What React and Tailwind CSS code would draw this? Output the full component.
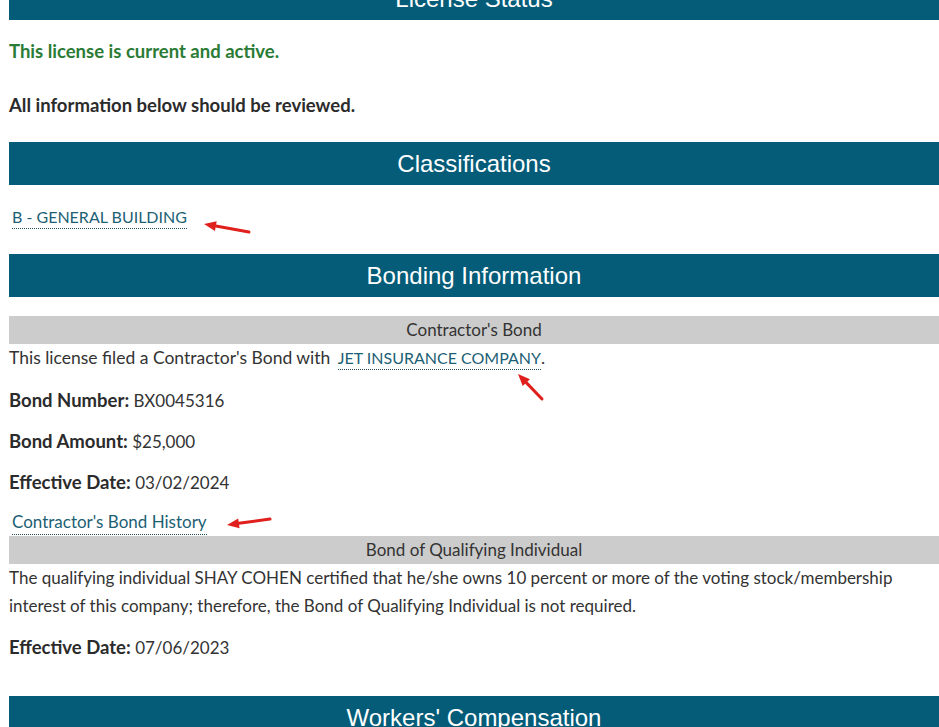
const Bar = ({ children, className = '' }) => (
  <div
    className={`flex h-[43px] items-center justify-center bg-[#045c78] text-[24px] text-white ${className}`}
    style={{ fontFamily: '"Liberation Sans", Arial, sans-serif' }}
  >
    {children}
  </div>
);

const SubBar = ({ children }) => (
  <div className="flex h-[28px] items-center justify-center bg-[#cccccc] text-[#333]">
    {children}
  </div>
);

const Link = ({ children, className = '' }) => (
  <a href="#" className={`ml-[3px] border-b border-dotted border-[#1b4f5f] pb-[2px] text-[#1d5f74] ${className}`}>
    {children}
  </a>
);

const Label = ({ children }) => <b className="text-[18.5px] text-[#2b2b2b]">{children}</b>;

// red annotation arrow, tip at (x2, y2)
const Arrow = ({ x1, y1, x2, y2 }) => {
  const a = Math.atan2(y2 - y1, x2 - x1);
  const len = 12;
  const w = 5;
  const bx = x2 - Math.cos(a) * len;
  const by = y2 - Math.sin(a) * len;
  const px = -Math.sin(a) * w;
  const py = Math.cos(a) * w;
  return (
    <g>
      <line x1={x1} y1={y1} x2={bx} y2={by} stroke="#e0201c" strokeWidth="3" strokeLinecap="round" />
      <polygon points={`${x2},${y2} ${bx + px},${by + py} ${bx - px},${by - py}`} fill="#e0201c" />
    </g>
  );
};

export default function App() {
  return (
    <div className="relative h-[727px] w-[939px] overflow-hidden bg-white">
      <div
        className="pl-[9px] text-[17px] leading-[28px] text-[#333]"
        style={{ fontFamily: 'Lato, "Open Sans", sans-serif' }}
      >
        <Bar className="mt-[-23px]">License Status</Bar>

        <p className="mt-[17px] h-[28px] text-[18.5px] font-bold text-[#2a7b35]">This license is current and active.</p>
        <p className="mt-[26px] h-[28px] text-[18.5px] font-bold text-[#2b2b2b]">All information below should be reviewed.</p>

        <Bar className="mt-[23px]">Classifications</Bar>

        <div className="mt-[18px] h-[28px]">
          <Link className="text-[16px]">B - GENERAL BUILDING</Link>
        </div>

        <Bar className="mt-[23px]">Bonding Information</Bar>

        <div className="mt-[19px]">
          <SubBar>Contractor's Bond</SubBar>
          <p className="h-[28px] text-[17.5px]">
            This license filed a Contractor's Bond with{' '}
            <Link className="text-[16px]">JET INSURANCE COMPANY</Link>.
          </p>
          <p className="mt-[14px] h-[28px]"><Label>Bond Number:</Label> BX0045316</p>
          <p className="mt-[13px] h-[28px]"><Label>Bond Amount:</Label> $25,000</p>
          <p className="mt-[13px] h-[28px]"><Label>Effective Date:</Label> 03/02/2024</p>
          <div className="mt-[12px] h-[28px]">
            <Link>Contractor's Bond History</Link>
          </div>

          <SubBar>Bond of Qualifying Individual</SubBar>
          <p className="pr-[8px]">
            The qualifying individual SHAY COHEN certified that he/she owns 10 percent or more of the voting
            stock/membership interest of this company; therefore, the Bond of Qualifying Individual is not required.
          </p>
          <p className="mt-[13px] h-[28px]"><Label>Effective Date:</Label> 07/06/2023</p>
        </div>

        <Bar className="mt-[35px]">Workers' Compensation</Bar>
      </div>

      <svg className="pointer-events-none absolute left-0 top-0" width="939" height="727">
        <Arrow x1={249} y1={232} x2={204} y2={224} />
        <Arrow x1={542} y1={399} x2={518} y2={374} />
        <Arrow x1={270} y1={519} x2={227} y2={525} />
      </svg>
    </div>
  );
}
